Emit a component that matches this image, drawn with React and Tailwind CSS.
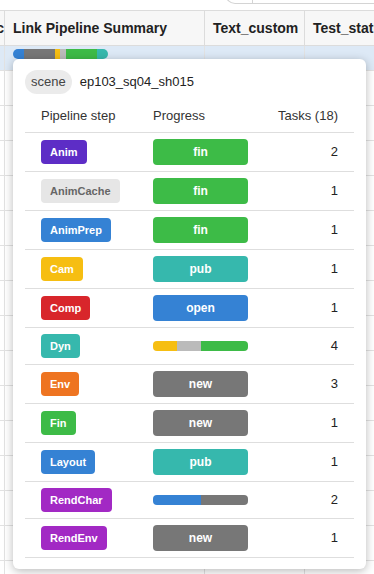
import React from 'react'

const rows = [
  { step: 'Anim', badge: 'bg-[#5d2dc6] text-white', prog: { label: 'fin', cls: 'bg-[#3dbb47]' }, tasks: 2 },
  { step: 'AnimCache', badge: 'bg-[#e6e6e6] text-[#666]', prog: { label: 'fin', cls: 'bg-[#3dbb47]' }, tasks: 1 },
  { step: 'AnimPrep', badge: 'bg-[#3582d4] text-white', prog: { label: 'fin', cls: 'bg-[#3dbb47]' }, tasks: 1 },
  { step: 'Cam', badge: 'bg-[#f6be12] text-white', prog: { label: 'pub', cls: 'bg-[#36b8ad]' }, tasks: 1 },
  { step: 'Comp', badge: 'bg-[#d8262b] text-white', prog: { label: 'open', cls: 'bg-[#3582d4]' }, tasks: 1 },
  {
    step: 'Dyn', badge: 'bg-[#36b8ad] text-white', tasks: 4,
    bar: [
      { n: 1, cls: 'bg-[#f6be12]' },
      { n: 1, cls: 'bg-[#bbbbbb]' },
      { n: 2, cls: 'bg-[#3dbb47]' },
    ],
  },
  { step: 'Env', badge: 'bg-[#ee7421] text-white', prog: { label: 'new', cls: 'bg-[#777777]' }, tasks: 3 },
  { step: 'Fin', badge: 'bg-[#3dbb47] text-white', prog: { label: 'new', cls: 'bg-[#777777]' }, tasks: 1 },
  { step: 'Layout', badge: 'bg-[#3582d4] text-white', prog: { label: 'pub', cls: 'bg-[#36b8ad]' }, tasks: 1 },
  {
    step: 'RendChar', badge: 'bg-[#a229c4] text-white', tasks: 2,
    bar: [
      { n: 1, cls: 'bg-[#3582d4]' },
      { n: 1, cls: 'bg-[#777777]' },
    ],
  },
  { step: 'RendEnv', badge: 'bg-[#a229c4] text-white', prog: { label: 'new', cls: 'bg-[#777777]' }, tasks: 1 },
]

const summary = [
  { n: 2, cls: 'bg-[#3582d4]' },
  { n: 6, cls: 'bg-[#777777]' },
  { n: 1, cls: 'bg-[#f6be12]' },
  { n: 1, cls: 'bg-[#bbbbbb]' },
  { n: 6, cls: 'bg-[#3dbb47]' },
  { n: 2, cls: 'bg-[#36b8ad]' },
]

const Bar = ({ parts, className }) => {
  const total = parts.reduce((s, p) => s + p.n, 0)
  return (
    <div className={`flex overflow-hidden ${className}`}>
      {parts.map((p, i) => (
        <div key={i} className={p.cls} style={{ width: `${(p.n / total) * 100}%` }} />
      ))}
    </div>
  )
}

const BgRow = ({ className = '', children }) => (
  <div className={`flex border-b border-[#e2e2e2] ${className}`}>
    <div className="w-[5px] shrink-0 border-r border-[#e2e2e2]" />
    <div className="w-[200px] shrink-0 border-r border-[#e2e2e2] px-2">{children}</div>
    <div className="w-[100px] shrink-0 border-r border-[#e2e2e2]" />
    <div className="flex-1" />
  </div>
)

export default function App() {
  return (
    <div className="relative h-[574px] w-[374px] overflow-hidden bg-white font-['Liberation_Sans',Arial,sans-serif] text-[#222]">
      {/* top strip */}
      <div className="flex h-[10px] overflow-hidden">
        <div className="w-[225px] shrink-0" />
        <div className="-mt-[6px] h-[10px] w-[27px] shrink-0 rounded-bl-[10px] border-b border-l border-[#d4d4d4]" />
        <div className="-mt-[6px] h-[10px] flex-1 border-b border-l border-[#d4d4d4]" />
      </div>

      {/* header */}
      <div className="flex h-[36px] border-y border-[#dcdcdc] bg-[#f7f7f7] text-[14px] font-bold text-[#222]">
        <div className="flex w-[5px] shrink-0 items-center justify-end overflow-hidden whitespace-nowrap border-r border-[#dcdcdc]">
          Sc
        </div>
        <div className="flex w-[200px] shrink-0 items-center border-r border-[#dcdcdc] px-2">Link Pipeline Summary</div>
        <div className="flex w-[100px] shrink-0 items-center border-r border-[#dcdcdc] px-2">Text_custom</div>
        <div className="flex flex-1 items-center overflow-hidden whitespace-nowrap px-2">Test_status</div>
      </div>

      {/* selected row */}
      <BgRow className="h-[25px] bg-[#dde9f6]">
        <Bar parts={summary} className="mt-[3px] h-[10px] w-[95px] rounded-[5px]" />
      </BgRow>
      {Array.from({ length: 15 }).map((_, i) => (
        <BgRow key={i} className="h-[35px]" />
      ))}

      {/* popover */}
      <div className="absolute left-[13px] top-[59px] w-[353px] rounded-[6px] bg-white px-3 pb-[11px] pt-[11px] shadow-[0_2px_10px_rgba(0,0,0,0.28)]">
        <div className="flex items-center gap-2">
          <span className="flex h-[24px] items-center rounded-full bg-[#ebebeb] px-[6px] text-[13px] text-[#444]">scene</span>
          <span className="text-[13px] text-[#222]">ep103_sq04_sh015</span>
        </div>
        <div className="mt-[6px] grid h-[33px] grid-cols-[112px_127px_1fr] items-center border-b border-[#dedede] text-[13px] text-[#333]">
          <div className="pl-4">Pipeline step</div>
          <div className="pl-4">Progress</div>
          <div className="pr-4 text-right">Tasks (18)</div>
        </div>
        {rows.map((r) => (
          <div key={r.step} className="grid grid-cols-[112px_127px_1fr] items-center border-b border-[#dedede] py-[6px]">
            <div className="flex pl-4">
              <span className={`flex h-[24px] items-center rounded-[4px] px-[9px] text-[11px] font-bold ${r.badge}`}>
                {r.step}
              </span>
            </div>
            <div className="flex pl-4">
              {r.bar ? (
                <Bar parts={r.bar} className="h-[10px] w-[95px] rounded-[4px]" />
              ) : (
                <div className={`flex h-[26px] w-[95px] items-center justify-center rounded-[4px] text-[12px] font-bold text-white ${r.prog.cls}`}>
                  {r.prog.label}
                </div>
              )}
            </div>
            <div className="pr-4 text-right text-[13px] text-[#222]">{r.tasks}</div>
          </div>
        ))}
      </div>
    </div>
  )
}
